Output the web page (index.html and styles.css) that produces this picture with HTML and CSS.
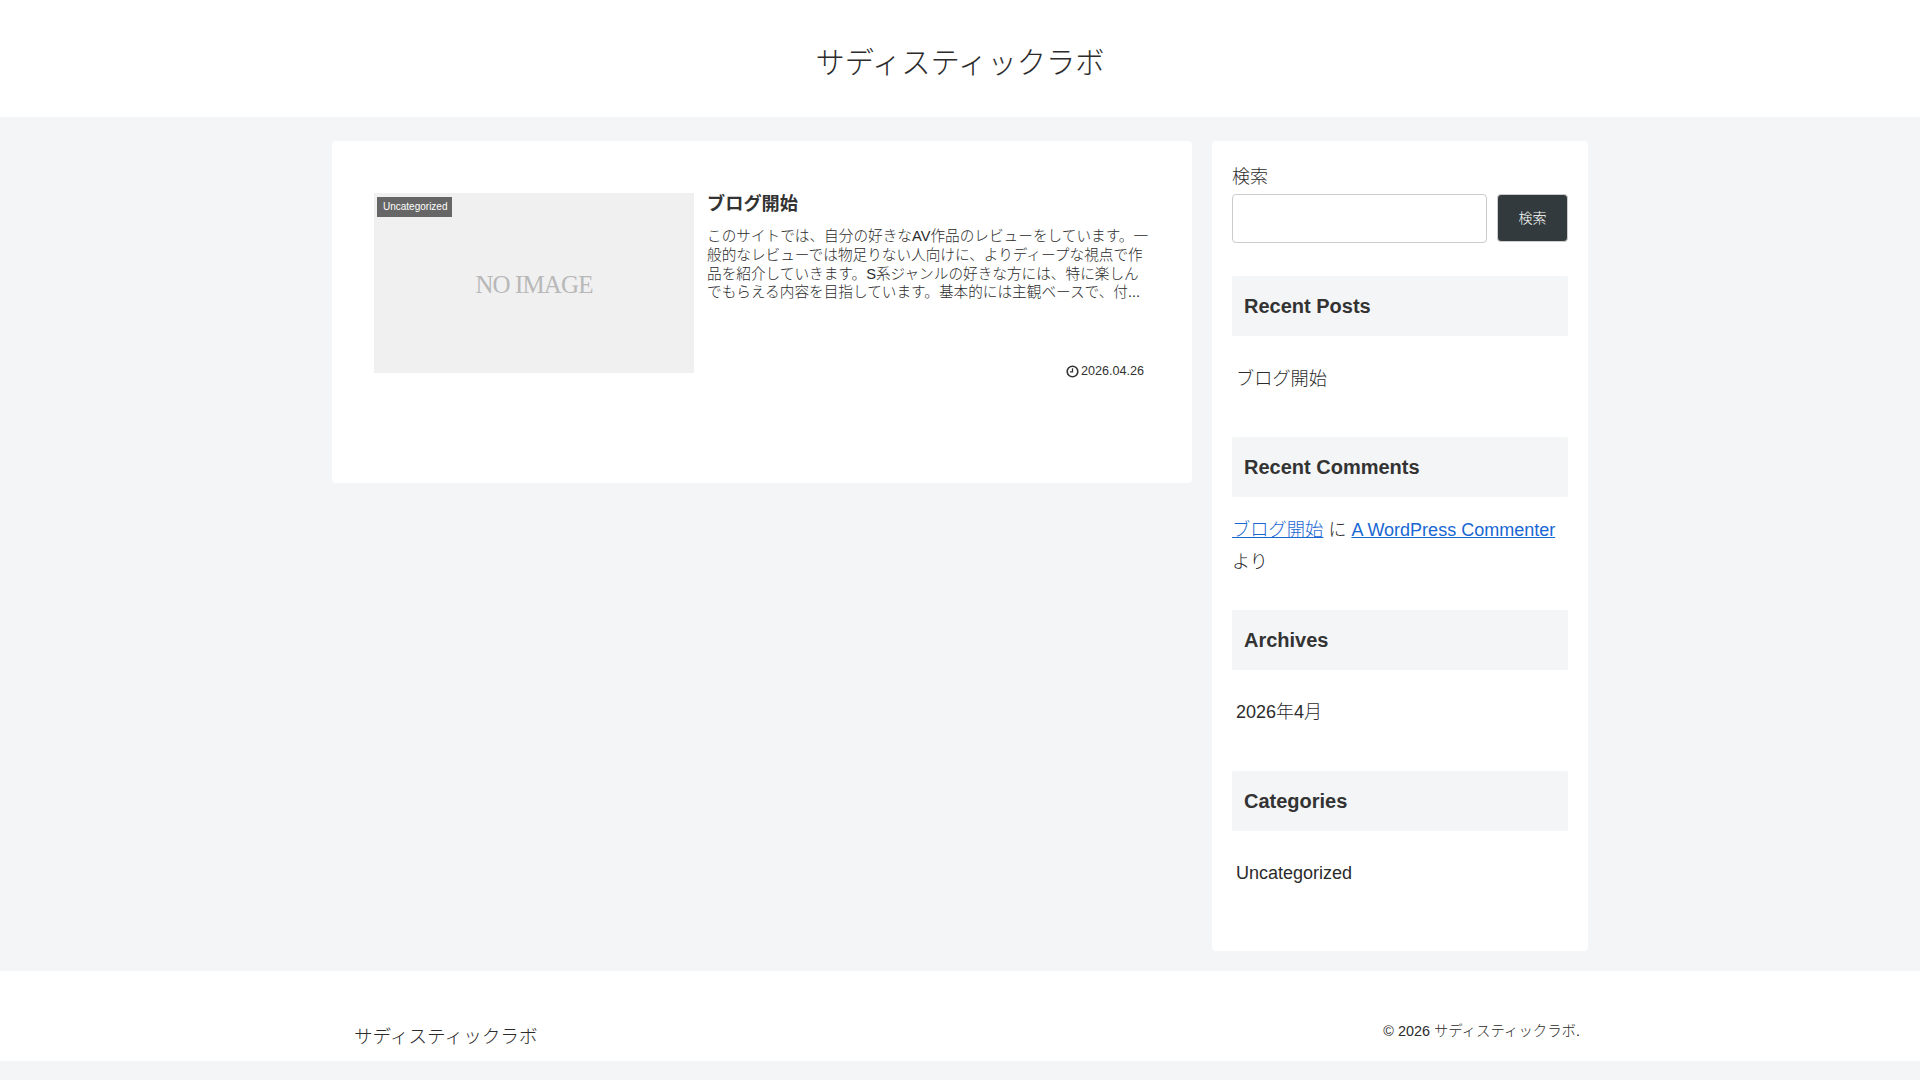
FILE: index.html
```html
<!DOCTYPE html>
<html lang="ja">
<head>
<meta charset="utf-8">
<title>サディスティックラボ</title>
<link rel="stylesheet" href="styles.css">
</head>
<body>
<header class="site-header"><a class="site-title" href="#">サディスティックラボ</a></header>
<div class="content">
  <main class="main">
    <article class="entry">
      <figure class="thumb">
        <span class="thumb-text">NO IMAGE</span>
        <span class="cat-label">Uncategorized</span>
      </figure>
      <div class="entry-body">
        <h2 class="entry-title">ブログ開始</h2>
        <p class="entry-snippet">このサイトでは、自分の好きなAV作品のレビューをしています。一般的なレビューでは物足りない人向けに、よりディープな視点で作品を紹介していきます。S系ジャンルの好きな方には、特に楽しんでもらえる内容を目指しています。基本的には主観ベースで、付...</p>
        <div class="entry-meta">
          <svg class="clock" viewBox="0 0 12 12" aria-hidden="true"><circle cx="6" cy="6" r="4.9" fill="none" stroke="#333" stroke-width="1.5"/><path d="M6 3v3.3H3.6" fill="none" stroke="#333" stroke-width="1.2"/></svg>
          <span>2026.04.26</span>
        </div>
      </div>
    </article>
  </main>
  <aside class="sidebar">
    <section class="search">
      <label class="search-label" for="s">検索</label>
      <div class="search-row">
        <input class="search-input" id="s" type="text">
        <button class="search-button" type="button">検索</button>
      </div>
    </section>
    <section class="widget">
      <h3 class="widget-title">Recent Posts</h3>
      <p class="widget-item widget-item-ja">ブログ開始</p>
    </section>
    <section class="widget">
      <h3 class="widget-title">Recent Comments</h3>
      <p class="comment"><a class="comment-post" href="#">ブログ開始</a> に <a href="#">A WordPress Commenter</a> より</p>
    </section>
    <section class="widget">
      <h3 class="widget-title">Archives</h3>
      <p class="widget-item">2026年4月</p>
    </section>
    <section class="widget">
      <h3 class="widget-title">Categories</h3>
      <p class="widget-item">Uncategorized</p>
    </section>
  </aside>
</div>
<footer class="site-footer">
  <div class="footer-inner">
    <a class="footer-title" href="#">サディスティックラボ</a>
    <span class="copyright">© 2026 サディスティックラボ.</span>
  </div>
</footer>
</body>
</html>
```
FILE: styles.css
```css
* { box-sizing: border-box; }
html, body { margin: 0; padding: 0; }
body {
  background: #f4f5f7;
  color: #2b2b2b;
  font-family: "Liberation Sans", "Noto Sans CJK JP", sans-serif;
  font-size: 18px;
  font-weight: 300;
  min-height: 1080px;
}
a { color: inherit; text-decoration: none; }
.site-header {
  background: #fff;
  height: 117px;
  display: flex;
  justify-content: center;
  align-items: center;
  padding-top: 3px;
}
.site-title { font-size: 29.3px; }
.content {
  width: 1256px;
  margin: 24px auto 0;
  display: flex;
  justify-content: space-between;
  align-items: flex-start;
}
.main {
  width: 860px;
  height: 342px;
  background: #fff;
  border-radius: 4px;
  padding: 52px 42px 0;
}
.entry { display: flex; height: 180px; }
.thumb {
  position: relative;
  margin: 0;
  width: 320px;
  height: 180px;
  flex: none;
  background: #f0f0f1;
  display: flex;
  align-items: center;
  justify-content: center;
}
.thumb-text {
  font-family: "Liberation Serif", serif;
  font-size: 25px;
  letter-spacing: -0.9px;
  color: #b8b8b8;
  padding-top: 3px;
}
.cat-label {
  position: absolute;
  left: 3px;
  top: 4px;
  height: 20px;
  line-height: 19px;
  padding: 0 5px 0 6px;
  background: #666;
  color: #fff;
  font-size: 10px;
  font-weight: 400;
}
.entry-body {
  flex: 1;
  min-width: 0;
  padding-left: 13px;
  display: flex;
  flex-direction: column;
}
.entry-title {
  margin: 0;
  font-size: 18.2px;
  line-height: 23px;
  font-weight: 700;
  color: #333;
}
.entry-snippet {
  margin: 11px 0 0;
  font-size: 14.65px;
  line-height: 18.8px;
  width: 445px;
}
.entry-meta {
  margin-top: auto;
  margin-right: 6px;
  height: 20px;
  display: flex;
  justify-content: flex-end;
  align-items: center;
  gap: 2px;
  font-size: 12.6px;
  font-weight: 400;
  color: #333;
  transform: translateY(8px);
}
.clock { width: 13px; height: 13px; }
.sidebar {
  width: 376px;
  height: 810px;
  background: #fff;
  border-radius: 4px;
  padding: 20px 20px 0;
}
.search-label { display: block; line-height: 32px; height: 33px; }
.search-row { display: flex; justify-content: space-between; }
.search-input {
  width: 255px;
  height: 49px;
  border: 1px solid #ccc;
  border-radius: 4px;
  background: #fff;
  padding: 0;
}
.search-button {
  width: 71px;
  height: 48px;
  border: 1px solid #ccc;
  border-radius: 4px;
  background: #333a3d;
  color: #fff;
  font: inherit;
  font-size: 14px;
  padding: 0 0 2px;
}
.widget { margin-top: 33px; }
.widget-title {
  margin: 0;
  height: 60px;
  line-height: 60px;
  padding-left: 12px;
  background: #f4f5f7;
  border-radius: 2px;
  font-size: 20px;
  font-weight: 700;
  color: #333;
}
.widget-item {
  margin: 0;
  height: 68px;
  padding: 26px 0 0 4px;
  line-height: 32px;
}
.widget-item-ja { padding-top: 27px; font-size: 18.2px; }
.comment {
  margin: 0;
  padding-top: 17px;
  height: 80px;
  line-height: 32px;
}
.comment a { color: #1967d2; text-decoration: underline; }
.comment .comment-post { font-size: 18.3px; }
.site-footer {
  background: #fff;
  height: 90px;
  margin-top: 20px;
}
.footer-inner {
  width: 1256px;
  margin: 0 auto;
  height: 100%;
  padding: 48px 8px 0 22px;
  display: flex;
  justify-content: space-between;
  align-items: flex-start;
}
.footer-title { font-size: 18.6px; line-height: 36px; }
.copyright { font-size: 14.4px; line-height: 25px; }
```
